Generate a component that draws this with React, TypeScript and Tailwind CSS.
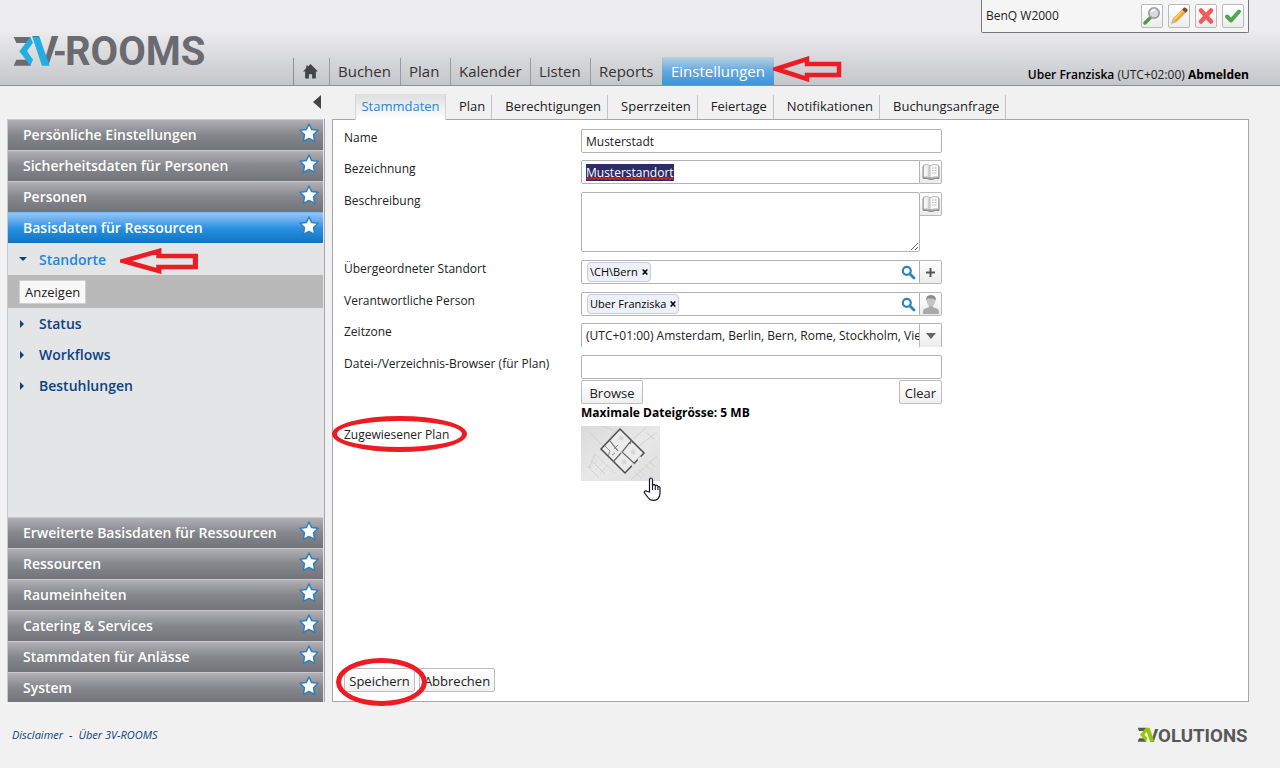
import { useEffect, useRef } from "react";
import type { ReactNode } from "react";

const RED = "#ed1c24";

function RedArrow({ className }: { className: string }) {
  return (
    <svg
      viewBox="0 0 70 26"
      preserveAspectRatio="none"
      className={`pointer-events-none absolute z-10 ${className}`}
      fill="none"
      stroke={RED}
      aria-hidden="true"
    >
      <path d="M3 13 L34 3 V8 H66 V19 H34 V23 Z" strokeWidth="4.5" strokeLinejoin="miter" />
    </svg>
  );
}

function RedEllipse({ className }: { className: string }) {
  return (
    <span aria-hidden="true" className={`pointer-events-none absolute z-10 rounded-[50%] border-[#ed1c24] ${className}`} />
  );
}

function RoomsLogo() {
  return (
    <svg viewBox="38 46 582 96" className="h-8 w-[194px] overflow-visible" role="img" aria-label="3V-ROOMS">
      <g fill="#6a6a70" fontSize="120" fontWeight="700" fontFamily="Roboto, sans-serif">
        <path d="M40 52H90L84 70H48Z" />
        <path d="M48 120H84L92 138H40Z" />
        <text x="96" y="137">
          V
        </text>
        <rect x="164" y="94" width="29" height="13" />
        <text x="194" y="137">
          ROOMS
        </text>
      </g>
      <path d="M90 52L98 69L80 94L98 120L90 138L57 95Z" fill="#22ade4" />
      <path d="M96 51H117L148 138H125Z" fill="#22ade4" />
    </svg>
  );
}

function VolutionsLogo() {
  return (
    <svg viewBox="112 114 336 54" className="h-[18px] w-28 overflow-visible" role="img" aria-label="3VOLUTIONS">
      <g fill="#58585a">
        <path d="M114 119H140L136 129H118Z" />
        <path d="M118 151H136L140 161H114Z" />
        <text x="139" y="161" fontSize="56" fontWeight="700" fontFamily="Roboto, sans-serif">
          VOLUTIONS
        </text>
      </g>
      <path d="M139 119L143 129L134 140L143 151L139 161L121 140Z" fill="#97c800" />
      <path d="M139 119H150L164 161H152Z" fill="#97c800" />
    </svg>
  );
}

function Star() {
  return (
    <svg viewBox="0 0 20 20" className="h-5 w-5" aria-hidden="true">
      <path
        d="M10 1L12.700 6.600L19 7.300L14.500 11.700L15.700 18.500L10 15.300L4.300 18.500L5.500 11.700L1 7.300L7.300 6.600Z"
        fill="#fff"
        stroke="#2f7fbd"
        strokeWidth="1.500"
        strokeLinejoin="round"
      />
    </svg>
  );
}

function SideHeader({ label, active = false }: { label: string; active?: boolean }) {
  return (
    <button
      type="button"
      className={`flex h-[31px] w-full items-center justify-between border-t pr-1 pl-[15px] text-left text-sm font-semibold text-white ${
        active
          ? "border-[#7fb8ec] bg-linear-to-b from-[#92c6f8] via-[#2a92e2] to-[#0c73c2]"
          : "border-[#c9c9cd] bg-linear-to-b from-[#b0b0b5] via-[#86878c] to-[#72747a]"
      }`}
    >
      <span className="whitespace-nowrap">{label}</span>
      <span className="pb-1">
        <Star />
      </span>
    </button>
  );
}

function SideItem({ label }: { label: string }) {
  return (
    <button type="button" className="flex h-[31px] w-full items-center pl-3 text-left text-sm font-semibold text-[#0b427f]">
      <svg viewBox="0 0 5 8" className="mr-[14px] h-2 w-[5px]" aria-hidden="true">
        <path d="M0 0L4 4L0 8Z" fill="#0b427f" />
      </svg>
      {label}
    </button>
  );
}

const iconButton =
  "flex h-6 w-[22px] shrink-0 items-center justify-center rounded-r-[2px] border border-l-0 border-[#b9b9b9] bg-linear-to-b from-white to-[#ececec]";
const textButton =
  "h-6 rounded-[2px] border border-[#bdbdbd] bg-linear-to-b from-white to-[#f0f0f0] pt-px text-[13px] leading-5 text-[#222]";
const fieldBorder = "border border-[#b3b3b3] bg-white";

function BookIcon() {
  return (
    <svg viewBox="0 0 18 18" className="h-[18px] w-[18px]" aria-hidden="true">
      <path d="M1 3.500V15.500Q5 15 8 16.500H10Q13 15 17 15.500V3.500" fill="#a8a8a8" stroke="#8a8a8a" strokeWidth="1" />
      <path d="M1.500 2Q5.500 1 8 2.500V15Q5 13.500 1.500 14Z" fill="#f4f4f4" stroke="#a5a5a5" strokeWidth=".8" />
      <path d="M8 2.500Q12 .8 16.500 2V14Q12 13.500 8 15Z" fill="#fafafa" stroke="#a5a5a5" strokeWidth=".8" />
      <path d="M6.700 2.500V14" stroke="#cfcfcf" strokeWidth="2" />
      <path d="M10 5H11.500M12.500 5H14.500M10 7.500H11.500M12.500 7.500H14.500M10 10H11.500M12.500 10H14.500" stroke="#b0b0b0" strokeWidth="1" />
    </svg>
  );
}

function BlueMagnifier() {
  return (
    <svg viewBox="0 0 15 15" className="h-[15px] w-[15px]" fill="none" aria-hidden="true">
      <circle cx="5.800" cy="5.800" r="4" stroke="#2f82c0" strokeWidth="2.200" />
      <path d="M9 9L13 13" stroke="#2f82c0" strokeWidth="2.800" strokeLinecap="round" />
    </svg>
  );
}

function Chip({ label }: { label: string }) {
  return (
    <span className="flex h-5 items-center gap-1 rounded-[4px] border border-[#c3cce0] bg-[#edf1f7] px-[2px] text-[11px] text-black">
      {label}
      <button type="button" aria-label={`${label} entfernen`} className="flex h-3 items-center">
        <svg viewBox="0 0 6 6" className="h-1.5 w-1.5" aria-hidden="true">
          <path d="M.7 .5L5.300 5.500M5.300 .5L.7 5.500" stroke="#000" strokeWidth="1.600" />
        </svg>
      </button>
    </span>
  );
}

function LookupField({ id, chip, children, action }: { id: string; chip: string; children: ReactNode; action: string }) {
  return (
    <div className="flex w-[361px]">
      <div className={`flex h-6 min-w-0 flex-1 items-center rounded-l-[2px] pr-[3px] pl-[5px] ${fieldBorder}`}>
        <Chip label={chip} />
        <input id={id} type="text" className="h-5 min-w-0 flex-1 bg-transparent px-1 outline-none" />
        <button type="button" aria-label="Suchen">
          <BlueMagnifier />
        </button>
      </div>
      <button type="button" aria-label={action} className={iconButton}>
        {children}
      </button>
    </div>
  );
}

function Row({ label, id, className = "mb-2", children }: { label: string; id: string; className?: string; children: ReactNode }) {
  return (
    <div className={`flex items-start ${className}`}>
      <label htmlFor={id} className="w-[237px] shrink-0 pt-px leading-4 whitespace-nowrap">
        {label}
      </label>
      {children}
    </div>
  );
}

function PlanDrawing() {
  return (
    <svg viewBox="0 0 79 55" className="h-[55px] w-[79px]" role="img" aria-label="Grundriss">
      <defs>
        <linearGradient id="paper" x1="0" y1="0" x2="1" y2="1">
          <stop offset="0" stopColor="#dadada" />
          <stop offset=".5" stopColor="#e8e8e8" />
          <stop offset="1" stopColor="#dedede" />
        </linearGradient>
      </defs>
      <rect width="79" height="55" fill="url(#paper)" />
      <g fill="none" stroke="#c9c9c9" strokeWidth=".7">
        <path d="M8 6L22 20L36 3M20 0L32 4M52 13L66 1M58 20L76 6M66 7L73 13M8 42L14 28L34 47M6 40L18 52M10 34L24 48M50 54L76 30M54 46L60 52M68 35L74 41" />
        <path d="M12 30L16 34L9 42M22 36L15 44M26 40L19 48M58 44L64 50M64 38L71 45" strokeDasharray="2 1" />
      </g>
      <path d="M39 3L63 27L44 47L20 23Z" fill="#ececec" stroke="#4c4c4c" strokeWidth="1.500" />
      <g fill="none" stroke="#6a6a6a" strokeWidth="1.200">
        <path d="M50 15L41 26L54 38M32 36L40 27M29 15L37 25M49 18L50 14L52 17" />
        <path d="M24 20L29 25L27 30M33 23L37 19M31 29L34 27" strokeWidth=".7" />
      </g>
      <g fill="#d8d8d8">
        <circle cx="40" cy="12" r="2.500" />
        <circle cx="52" cy="26" r="2.500" />
        <circle cx="43" cy="36" r="2.500" />
      </g>
      <path d="M51 40L53 38M57 34L60 31" stroke="#e8e8e8" strokeWidth="2" />
    </svg>
  );
}

function HandCursor() {
  return (
    <svg viewBox="0 0 18 24" className="pointer-events-none absolute top-[51px] left-[62px] h-6 w-[18px]" aria-hidden="true">
      <path
        d="M6.500 15V3Q6.500 1 8 1T9.500 3V9Q9.700 7.600 11 7.700T12.300 9.200Q12.800 8 14 8.400T14.900 10Q15.500 9.200 16.400 9.700T17 11.500V16.500Q17 20 14.500 22.200Q12.500 23.500 9.500 23.300Q6.500 23 5 20.500L1.800 16.300Q.8 14.900 1.800 14.200T4.200 14.500Z"
        fill="#fff"
        stroke="#15152a"
        strokeWidth="1.200"
      />
      <path d="M9.500 9V13M12.300 9.200V13M14.900 10V13" stroke="#15152a" strokeWidth="1.100" />
    </svg>
  );
}

const navItems = [
  { label: "Buchen", width: "w-[71px]" },
  { label: "Plan", width: "w-[50px]" },
  { label: "Kalender", width: "w-20" },
  { label: "Listen", width: "w-[60px]" },
  { label: "Reports", width: "w-[72px]" },
];
const tabs = ["Plan", "Berechtigungen", "Sperrzeiten", "Feiertage", "Notifikationen", "Buchungsanfrage"];
const lowerSections = [
  "Erweiterte Basisdaten für Ressourcen",
  "Ressourcen",
  "Raumeinheiten",
  "Catering & Services",
  "Stammdaten für Anlässe",
  "System",
];

const toolButton =
  "flex h-6 w-[22px] items-center justify-center rounded-[2px] border border-[#b9b9b9] bg-linear-to-b from-white to-[#ececec]";

export default function App() {
  const titleRef = useRef<HTMLInputElement>(null);

  useEffect(() => {
    titleRef.current?.focus();
    titleRef.current?.select();
  }, []);

  return (
    <div className="flex min-h-screen flex-col bg-[#f1f1f1] font-['Open_Sans',sans-serif] text-xs text-[#222]">
      <header className="flex h-[86px] items-stretch border-b border-[#8f8f94] bg-linear-to-b from-[#ededef] from-35% to-[#c5c6ca] pr-[31px] pl-[13px]">
        <div className="w-[280px] shrink-0 pt-[35px]">
          <RoomsLogo />
        </div>
        <nav className="flex items-end text-[15px] text-[#333]">
          <a
            href="#start"
            aria-label="Startseite"
            className="flex h-[27px] w-9 items-center justify-center border-l border-[#8f8f94] pr-[2px]"
          >
            <svg viewBox="0 0 14 14" className="h-[15px] w-[15px]" aria-hidden="true">
              <path d="M7 0L14 7H12V13.500H8.500V9.500H5.500V13.500H2V7H0L3 4V1.500H4.500V2.500Z" fill="#444" />
            </svg>
          </a>
          {navItems.map(({ label, width }) => (
            <a
              key={label}
              href={`#${label}`}
              className={`flex h-[27px] items-center border-l border-[#9a9a9f] pb-px pl-2 leading-5 ${width}`}
            >
              {label}
            </a>
          ))}
          <a
            href="#Einstellungen"
            className="relative flex h-7 w-28 items-center bg-linear-to-b from-[#b7cfe2] via-[#64a9dd] to-[#3b93db] pl-[9px] leading-5 text-white"
          >
            Einstellungen
            <RedArrow className="-top-px -right-[69px] h-[26px] w-[70px]" />
          </a>
        </nav>
        <div className="ml-auto flex flex-col items-end justify-between">
          <div className="flex h-[33px] w-[268px] items-center justify-between rounded-b-[2px] border border-t-0 border-[#77777b] bg-[#f5f5f5] pr-1 pl-1">
            <span>BenQ W2000</span>
            <div className="flex gap-[5px]">
              <button type="button" aria-label="Anzeigen" className={toolButton}>
                <svg viewBox="0 0 20 20" className="h-5 w-5" aria-hidden="true">
                  <path d="M3 17L8 12" stroke="#4c9e3d" strokeWidth="3.500" strokeLinecap="round" />
                  <circle cx="12" cy="7" r="5.200" fill="#d6dade" stroke="#9a9a9a" strokeWidth="1.600" />
                  <path d="M9 6Q10 3.600 13 4" stroke="#fff" strokeWidth="1.500" fill="none" />
                </svg>
              </button>
              <button type="button" aria-label="Bearbeiten" className={toolButton}>
                <svg viewBox="0 0 20 20" className="h-5 w-5" aria-hidden="true">
                  <path d="M2 18L3.500 13L7 16.500Z" fill="#b9b9b9" />
                  <path d="M3.500 13L13 3.500L16.500 7L7 16.500Z" fill="#f0a636" />
                  <path d="M4.600 14L14 4.700" stroke="#fbd083" strokeWidth="1.200" />
                  <path d="M13 3.500L15 1.500Q17 1 18.500 3.500L18.500 5L16.500 7Z" fill="#8a4a28" />
                </svg>
              </button>
              <button type="button" aria-label="Löschen" className={toolButton}>
                <svg viewBox="0 0 20 20" className="h-5 w-5" aria-hidden="true">
                  <path d="M5 4.500L15 15.500M15 4.500L5 15.500" stroke="#f25a5a" strokeWidth="4.500" strokeLinecap="round" />
                </svg>
              </button>
              <button type="button" aria-label="Bestätigen" className={toolButton}>
                <svg viewBox="0 0 20 20" className="h-5 w-5" fill="none" aria-hidden="true">
                  <path d="M4 10.500L8 14.500L16 5.500" stroke="#4ea64e" strokeWidth="4" strokeLinecap="round" strokeLinejoin="round" />
                </svg>
              </button>
            </div>
          </div>
          <p className="mb-[2px] leading-4 whitespace-nowrap">
            <b className="font-semibold text-black">Uber Franziska</b> (UTC+02:00){" "}
            <a href="#abmelden" className="font-bold text-black">
              Abmelden
            </a>
          </p>
        </div>
      </header>

      <div className="flex items-stretch gap-[7px] pr-[31px] pl-[7px]">
        <aside className="flex w-[318px] shrink-0 flex-col">
          <div className="flex h-[33px] items-center justify-end pr-1 pb-px">
            <button type="button" aria-label="Seitenleiste einklappen">
              <svg viewBox="0 0 8 14" className="h-[14px] w-2" aria-hidden="true">
                <path d="M8 0V14L0 7Z" fill="#444" />
              </svg>
            </button>
          </div>
          <div className="flex flex-1 flex-col overflow-hidden border-r border-l border-r-[#a5a5aa] border-l-[#c9c9cd] bg-[#e4e5e7] pr-px">
            <SideHeader label="Persönliche Einstellungen" />
            <SideHeader label="Sicherheitsdaten für Personen" />
            <SideHeader label="Personen" />
            <SideHeader label="Basisdaten für Ressourcen" active />
            <button type="button" className="flex h-8 w-full items-center pt-px pl-[11px] text-left text-sm font-semibold text-[#1c87db]">
              <svg viewBox="0 0 8 5" className="mr-3 h-[5px] w-2" aria-hidden="true">
                <path d="M0 0H8L4 4Z" fill="#0b427f" />
              </svg>
              <span className="relative">
                Standorte
                <RedArrow className="-top-[2px] -right-[94px] h-[26px] w-20" />
              </span>
            </button>
            <div className="flex h-[33px] items-center bg-[#b9b9b9] pl-[11px]">
              <button type="button" className="h-6 rounded-[1px] border border-[#d0d0d0] bg-[#f8f8f8] px-[5px] pt-px text-[13px] leading-5">
                Anzeigen
              </button>
            </div>
            <SideItem label="Status" />
            <SideItem label="Workflows" />
            <SideItem label="Bestuhlungen" />
            <div className="min-h-4 flex-1" />
            <div className="-mb-px">
              {lowerSections.map((section) => (
                <SideHeader key={section} label={section} />
              ))}
            </div>
          </div>
        </aside>

        <main className="flex min-w-0 flex-1 flex-col">
          <div role="tablist" className="flex h-[33px] items-end pl-[23px] text-[13px]">
            <button
              type="button"
              role="tab"
              aria-selected="true"
              className="relative z-10 -mb-px h-[26px] w-[91px] border-r border-l border-[#d4d4d4] bg-linear-to-b from-[#dedede] to-white text-[#1f86db]"
            >
              Stammdaten
            </button>
            {tabs.map((tab) => (
              <button
                key={tab}
                type="button"
                role="tab"
                aria-selected="false"
                className="h-6 border-r border-[#c4c4c7] pr-[6px] pl-[13px] whitespace-nowrap"
              >
                {tab}
              </button>
            ))}
          </div>
          <form
            className="flex min-h-[583px] flex-1 flex-col border border-[#a6a6ab] bg-white px-[11px] pt-[9px] pb-[9px]"
            onSubmit={(event) => event.preventDefault()}
          >
            <Row label="Name" id="name" className="mb-[7px]">
              <input id="name" type="text" defaultValue="Musterstadt" className={`h-6 w-[361px] rounded-[2px] px-1 ${fieldBorder}`} />
            </Row>
            <Row label="Bezeichnung" id="title">
              <div className="relative flex w-[361px]">
                <input
                  id="title"
                  ref={titleRef}
                  type="text"
                  spellCheck={false}
                  defaultValue="Musterstandort"
                  className={`h-6 min-w-0 flex-1 rounded-l-[2px] px-1 outline-none selection:bg-[#2d2c66] selection:text-white ${fieldBorder}`}
                />
                <svg viewBox="0 0 88 3" className="pointer-events-none absolute top-[17px] left-[5px] h-[3px] w-[88px]" aria-hidden="true">
                  <path
                    d={"M0 2.500" + Array.from({ length: 22 }, () => "l2 -2l2 2").join("")}
                    fill="none"
                    stroke="#e8202a"
                    strokeWidth="1.200"
                  />
                </svg>
                <button type="button" aria-label="Übersetzen" className={iconButton}>
                  <BookIcon />
                </button>
              </div>
            </Row>
            <Row label="Beschreibung" id="description">
              <div className="flex w-[361px] items-start">
                <textarea id="description" className={`block h-[60px] min-w-0 flex-1 resize rounded-[2px] px-1 ${fieldBorder}`} />
                <button type="button" aria-label="Übersetzen" className={iconButton}>
                  <BookIcon />
                </button>
              </div>
            </Row>
            <Row label="Übergeordneter Standort" id="parent">
              <LookupField id="parent" chip="\CH\Bern" action="Hinzufügen">
                <svg viewBox="0 0 9 9" className="h-[9px] w-[9px]" aria-hidden="true">
                  <path d="M4.500 0V9M0 4.500H9" stroke="#555" strokeWidth="2" />
                </svg>
              </LookupField>
            </Row>
            <Row label="Verantwortliche Person" id="person" className="mb-[7px]">
              <LookupField id="person" chip="Uber Franziska" action="Person wählen">
                <svg viewBox="0 0 18 20" className="h-5 w-[18px]" aria-hidden="true">
                  <path d="M1 20V17.500Q1 15 4 14.200L7 13V11H11V13L14 14.200Q17 15 17 17.500V20Z" fill="#a9a9a9" />
                  <ellipse cx="9" cy="7" rx="4.200" ry="5.500" fill="#c4c4c4" />
                  <path d="M4.200 7Q3.500 1 9 1T13.800 7Q13 4.500 10.500 4.500T6.500 4.200Q5 5 4.200 7Z" fill="#8a8a8a" />
                </svg>
              </LookupField>
            </Row>
            <Row label="Zeitzone" id="timezone">
              <div className="relative flex h-6 w-[361px] rounded-t-[2px] border border-b-0 border-[#b3b3b3] bg-white">
                <select id="timezone" className="h-6 w-full appearance-none bg-transparent pr-[22px] pl-1">
                  <option>(UTC+01:00) Amsterdam, Berlin, Bern, Rome, Stockholm, Vienna</option>
                </select>
                <span className="pointer-events-none absolute inset-y-0 right-0 flex w-[22px] items-center justify-center border-l border-[#b9b9b9] bg-linear-to-b from-white to-[#ececec]">
                  <svg viewBox="0 0 10 6" className="h-1.5 w-[10px]" aria-hidden="true">
                    <path d="M0 0H10L5 6Z" fill="#666" />
                  </svg>
                </span>
              </div>
            </Row>
            <Row label="Datei-/Verzeichnis-Browser (für Plan)" id="file" className="mb-[5px]">
              <div className="w-[361px]">
                <input id="file" type="text" className={`block h-6 w-full rounded-[2px] px-1 ${fieldBorder}`} />
                <div className="mt-px flex justify-between">
                  <button type="button" className={`${textButton} w-[62px]`}>
                    Browse
                  </button>
                  <button type="button" className={`${textButton} w-[43px]`}>
                    Clear
                  </button>
                </div>
                <p className="pt-px leading-4 font-bold text-black">Maximale Dateigrösse: 5 MB</p>
              </div>
            </Row>
            <div className="flex items-start">
              <div className="w-[237px] shrink-0 pt-px leading-4">
                <span className="relative">
                  Zugewiesener Plan
                  <RedEllipse className="-top-[10px] -left-[12px] h-9 w-[135px] border-[5px]" />
                </span>
              </div>
              <a href="#plan" className="relative block cursor-pointer">
                <PlanDrawing />
                <HandCursor />
              </a>
            </div>
            <div className="mt-auto flex gap-1">
              <div className="relative">
                <button type="submit" className={`${textButton} w-[71px]`}>
                  Speichern
                </button>
                <RedEllipse className="-top-[10px] -left-[8px] h-12 w-[91px] border-[5px]" />
              </div>
              <button type="button" className={`${textButton} w-[76px]`}>
                Abbrechen
              </button>
            </div>
          </form>
        </main>
      </div>

      <footer className="flex items-center justify-between pt-6 pr-[31px] pl-3">
        <p className="text-[11px] leading-4 text-[#0b427f] italic">
          <a href="#disclaimer">Disclaimer</a>
          <span className="px-[6px]">-</span>
          <a href="#about">Über 3V-ROOMS</a>
        </p>
        <VolutionsLogo />
      </footer>
    </div>
  );
}
